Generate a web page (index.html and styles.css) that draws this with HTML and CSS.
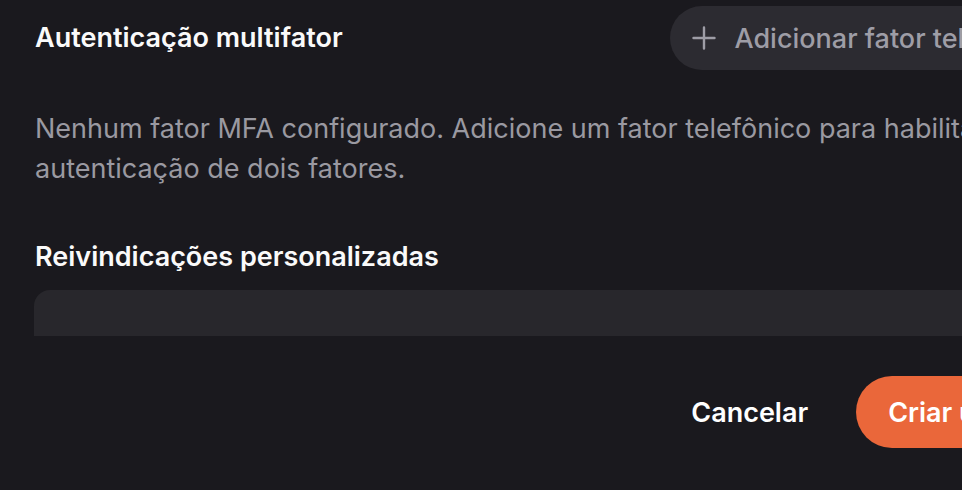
FILE: index.html
```html
<!DOCTYPE html>
<html lang="pt-BR">
<head>
    <meta charset="UTF-8">
    <meta name="viewport" content="width=device-width, initial-scale=1.0">
    <title>Criar usuário</title>
    <link rel="stylesheet" href="styles.css">
</head>
<body>
    <div class="dialog">
        <div class="dialog-body">
            <!-- MFA -->
            <div class="section-header">
                <h3 class="section-title">Autenticação multifator</h3>
                <button class="pill-btn" type="button">
                    <svg width="24" height="24" viewBox="0 0 24 24" fill="none" stroke="currentColor" stroke-width="2.4" stroke-linecap="round">
                        <path d="M12 1.5v21M1.5 12h21"/>
                    </svg>
                    Adicionar fator telefônico
                </button>
            </div>
            <p class="hint">Nenhum fator MFA configurado. Adicione um fator telefônico para habilitar a autenticação de dois fatores.</p>

            <!-- Claims -->
            <h3 class="section-title claims-title">Reivindicações personalizadas</h3>
            <div class="claims-box"></div>
        </div>

        <div class="dialog-footer">
            <button class="btn btn-ghost" type="button">Cancelar</button>
            <button class="btn btn-primary" type="button">Criar usuário</button>
        </div>
    </div>
</body>
</html>
```

FILE: styles.css
```css
body {
    margin: 0;
    padding: 0;
    background-color: #1a191e;
    font-family: Inter, "Noto Sans", sans-serif;
    overflow: hidden;
}

.dialog {
    width: 1123px;
}

.dialog-body {
    height: 330px;
    padding: 6px 34px 0 35px;
    overflow: hidden;
}

.section-header {
    display: flex;
    align-items: center;
    justify-content: space-between;
}

.section-title {
    margin: 0;
    color: #fafafa;
    font-size: 27px;
    font-weight: 600;
    line-height: 40px;
}

.pill-btn {
    display: flex;
    align-items: center;
    gap: 18px;
    height: 64px;
    padding: 0 28px 0 22px;
    border: none;
    border-radius: 32px;
    background-color: #2c2b31;
    color: #9e9da6;
    font-family: inherit;
    font-size: 27px;
    font-weight: 500;
}

.hint {
    margin: 39px 0 0;
    color: #9a99a1;
    font-size: 27px;
    line-height: 40px;
}

.claims-title {
    margin-top: 48px;
}

.claims-box {
    margin-top: 13px;
    height: 120px;
    margin-left: -1px;
    border-radius: 16px;
    background-color: #28272c;
}

.dialog-footer {
    display: flex;
    justify-content: flex-end;
    gap: 16px;
    padding: 40px 34px 0;
}

.btn {
    height: 72px;
    padding: 0 32px;
    border: none;
    border-radius: 36px;
    font-family: inherit;
    font-size: 27px;
    font-weight: 600;
    color: #fff;
}

.btn-ghost {
    background: transparent;
}

.btn-primary {
    background-color: #ea673a;
}
```
